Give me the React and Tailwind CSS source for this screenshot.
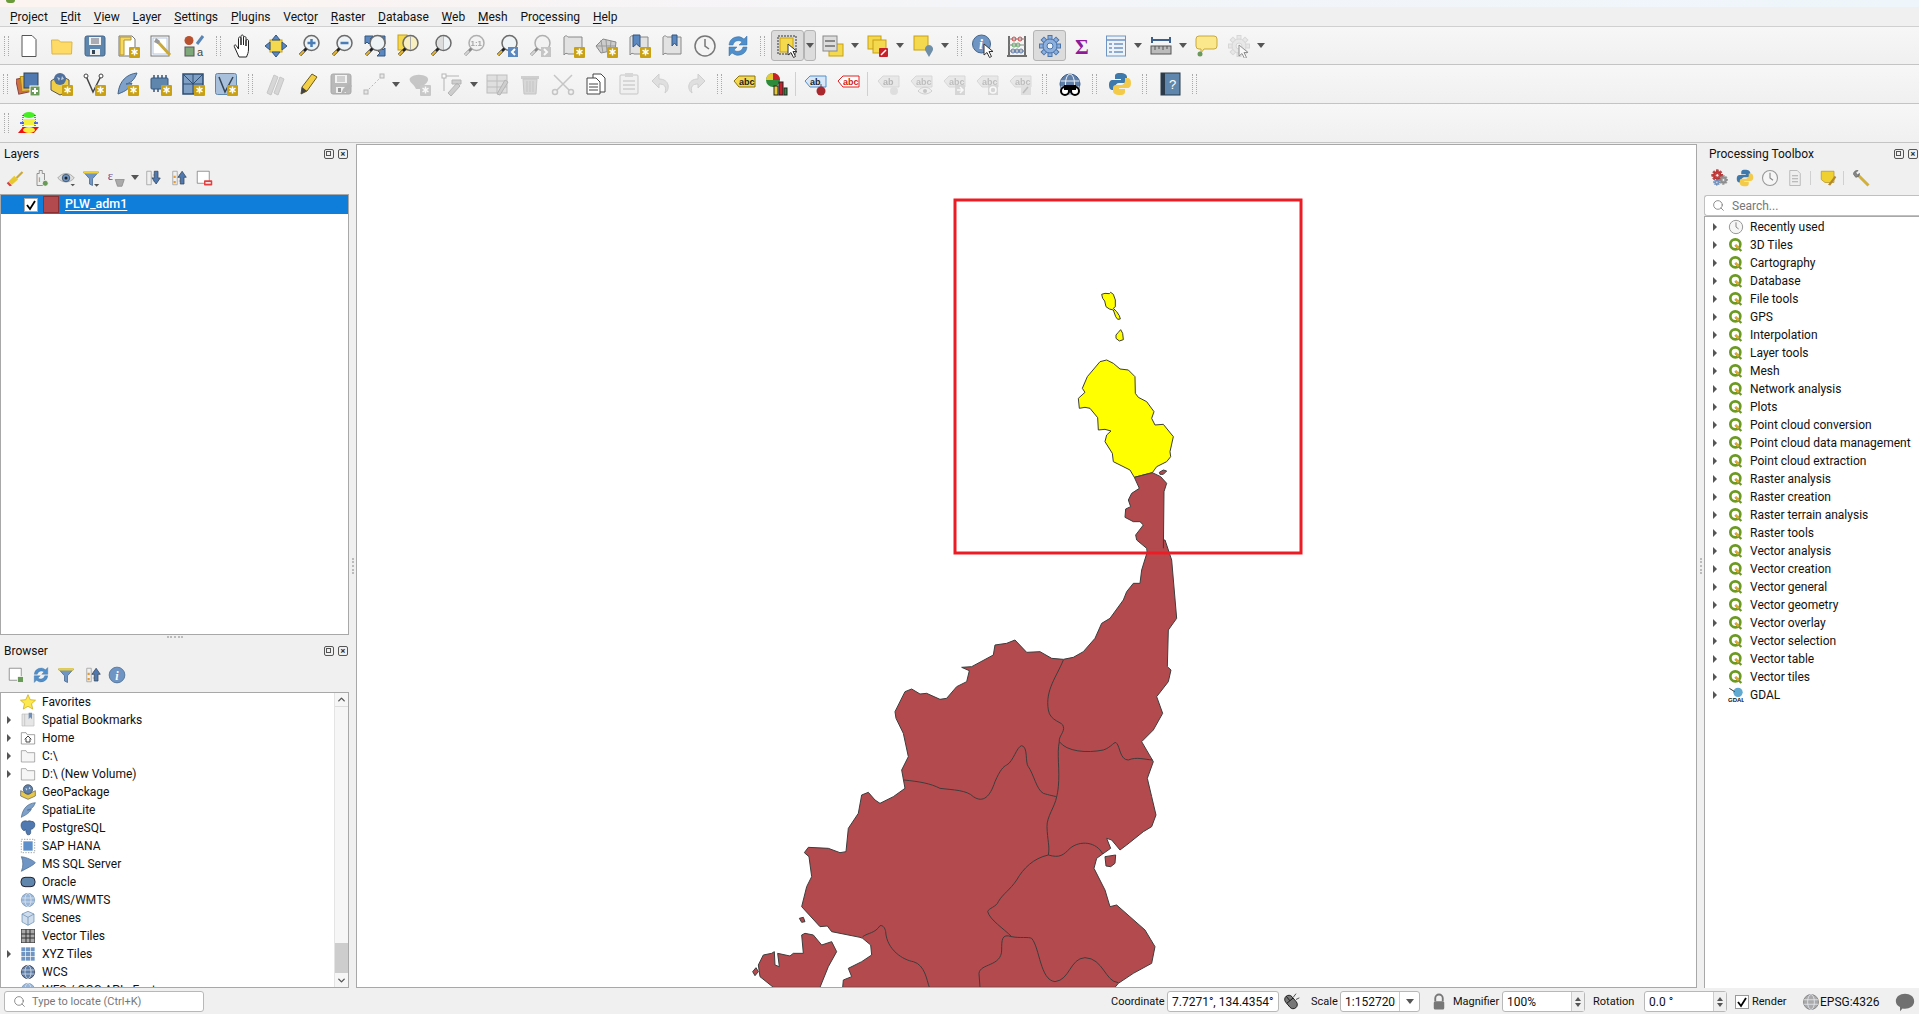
import { Search, ChevronUp, ChevronDown } from "lucide-react";

const menus = [
  ["", "P", "roject"], ["", "E", "dit"], ["", "V", "iew"], ["", "L", "ayer"], ["", "S", "ettings"], ["", "P", "lugins"],
  ["Vect", "o", "r"], ["", "R", "aster"], ["", "D", "atabase"], ["", "W", "eb"], ["", "M", "esh"], ["Pro", "c", "essing"], ["", "H", "elp"],
];

/* small pieces shared between icons */
const Badge = () => (
  <g>
    <rect x="13" y="13" width="11" height="11" rx="1" fill="#c9a112" />
    <path d="M18.5 14.5v7M15.5 16.2l6 3.6M21.5 16.2l-6 3.6" stroke="#fff" strokeWidth="1.5" />
  </g>
);
const Cursor = ({ x = 12, y = 10 }) => (
  <path transform={`translate(${x} ${y})`} d="M0 0v11l3-2.5 2.5 5 2-1-2.5-5h4z" fill="#fff" stroke="#333" strokeWidth="1" />
);
const Mag = ({ lens = "#eef3f6", children }) => (
  <g>
    <circle cx="14.5" cy="9" r="7.5" fill={lens} stroke="#6b6b6b" strokeWidth="1.5" />
    <path d="M9.5 14.5L3 21" stroke="#222" strokeWidth="3" />
    <path d="M7 17l-4 4" stroke="#e8b82e" strokeWidth="2" />
    {children}
  </g>
);
const Label = ({ fill = "#f4d94e", stroke = "#8a7410", color = "#222", text = "abc" }) => (
  <g>
    <path d="M2 9l5-5h16v11H7z" fill={fill} stroke={stroke} />
    <text x="7" y="13" fontSize="9" fontWeight="700" fontFamily="Liberation Sans" fill={color}>{text}</text>
  </g>
);
const Scroll = () => <path d="M3 3c2-2 3-1 4 0h14v17H7c-1-1-3-1-4 1z" fill="#e2e2e2" stroke="#888" />;
const Floppy = () => (
  <g>
    <rect x="2" y="2" width="20" height="20" rx="2" fill="#5f87ae" stroke="#44658a" />
    <rect x="6" y="3" width="12" height="8" fill="#f2f2f2" />
    <path d="M8 5h8M8 7h8M8 9h8" stroke="#667" />
    <rect x="7" y="15" width="10" height="6" fill="#eee" />
    <rect x="9" y="16" width="3" height="4" fill="#345" />
  </g>
);
const Globe = ({ fill = "#6f95c4", line = "#3d5f8c" }) => (
  <g>
    <circle cx="12" cy="12" r="10" fill={fill} stroke={line} />
    <ellipse cx="12" cy="12" rx="4.5" ry="10" fill="none" stroke="#e8eef5" />
    <path d="M2.5 9h19M2.5 15h19" stroke="#e8eef5" />
  </g>
);
const Funnel = ({ top = "#f0d030" }) => (
  <g>
    <path d="M2 4h20l-8 9v9l-4-2v-7z" fill="#6f95c4" stroke="#44658a" />
    <rect x="2" y="3" width="20" height="3" fill={top} />
  </g>
);
const Gear = ({ fill = "#8db0dc", stroke = "#4a74ac" }) => (
  <g>
    {[0, 45, 90, 135, 180, 225, 270, 315].map((a) => (
      <rect key={a} x="10" y="1.5" width="4" height="5" fill={fill} stroke={stroke} transform={`rotate(${a} 12 12)`} />
    ))}
    <circle cx="12" cy="12" r="7" fill={fill} stroke={stroke} />
    <circle cx="12" cy="12" r="3" fill="#eef3f8" stroke={stroke} />
  </g>
);
const Tree = ({ y = 0 }) => (
  <path transform={`translate(0 ${y})`} d="M5 3l6 0v18H5zM13 8h6v8h-6M11 11h2" fill="none" stroke="#999" />
);

const icons = {
  new: <path d="M5 1.5h10l4 4v17H5z" fill="#fff" stroke="#555" />,
  open: <path d="M2 20l-.5-14h7l2 2H22l-.5 12z" fill="#fedb66" stroke="#d9b64a" />,
  save: <Floppy />,
  newLayout: <g><path d="M3 2h13l3 3v17H3z" fill="#fff" stroke="#777" /><path d="M4 3h11v3H8v15H4z" fill="#f6d95e" stroke="#b8952a" /><Badge /></g>,
  layoutMgr: <g><rect x="2" y="2" width="18" height="20" fill="#fff" stroke="#777" /><rect x="4" y="4" width="14" height="16" fill="#fff" stroke="#b8c6e0" /><path d="M9 8l12 13" stroke="#c9a93a" strokeWidth="3" /><path d="M7 4l4 3-2 3-4-2z" fill="#999" /></g>,
  style: <g><circle cx="7" cy="6.5" r="4.5" fill="#b8512e" /><path d="M15 10l6-8" stroke="#5a86b5" strokeWidth="3" /><rect x="3" y="13" width="9" height="9" fill="#7fa87a" stroke="#555" /><text x="15" y="22" fontSize="11" fontFamily="Liberation Sans" fill="#444">a</text></g>,
  pan: <path d="M8 23L3.500 13c-1-2 1-3 2-1l2 3V4.500c0-2 2.500-2 2.500 0V11V2.500c0-2 2.500-2 2.500 0V11V4c0-2 2.500-2 2.500 0v8V7c0-2 2.500-2 2.500 0v8c0 4-1 5-2 8z" fill="#fff" stroke="#222" />,
  panSel: <g><rect x="6" y="6" width="12" height="12" fill="#f4d94e" stroke="#c9a010" /><path d="M12 1l4 5H8zM12 23l4-5H8zM1 12l5-4v8zM23 12l-5-4v8z" fill="#5b88c0" stroke="#35567f" /></g>,
  zoomIn: <Mag><path d="M14.500 5v8M10.500 9h8" stroke="#4a7db5" strokeWidth="2.500" /></Mag>,
  zoomOut: <Mag><path d="M10.500 9h8" stroke="#4a7db5" strokeWidth="2.500" /></Mag>,
  zoomFull: <g><path d="M2 2h8L7 5l2 2-3 3-2-2-2 2zM22 2h-8l3 3-2 2 3 3 2-2 2 2zM22 22h-8l3-3-2-2 3-3 2 2 2-2z" fill="#5b88c0" stroke="#35567f" /><Mag /></g>,
  zoomSel: <g><rect x="2" y="1" width="9" height="15" fill="#f4d94e" stroke="#c9a010" /><Mag lens="#f7efc0" /><path d="M14.500 2v14" stroke="#aaa" /></g>,
  zoomLayer: <g><Mag /><path d="M14.500 2v14" stroke="#999" /><path d="M8 9a6.500 6.500 0 0 1 6.500-6.500v13A6.500 6.500 0 0 1 8 9" fill="#ddd" /></g>,
  zoom11: <Mag><text x="8.500" y="12" fontSize="8" fontWeight="700" fontFamily="Liberation Sans" fill="#555">1:1</text></Mag>,
  zoomLast: <g><Mag /><rect x="13" y="13" width="10" height="10" fill="#5b88c0" /><path d="M20 15l-3 3 3 3" stroke="#fff" strokeWidth="2" fill="none" /></g>,
  zoomNext: <g><Mag /><rect x="13" y="13" width="10" height="10" fill="#999" /><path d="M16 15l3 3-3 3" stroke="#fff" strokeWidth="2" fill="none" /></g>,
  newMap: <g><Scroll /><Badge /></g>,
  new3d: <g><path d="M2 12l7-7 13 3 -1 8-14 3z" fill="#ccc" stroke="#888" /><path d="M7 6l2 13M12 6l1 12M17 7l-1 10M3 12l18 0" stroke="#999" /><Badge /></g>,
  newBm: <g><Scroll /><path d="M6 1h7v12l-3.500-3L6 13z" fill="#5b88c0" stroke="#35567f" /><Badge /></g>,
  showBm: <g><Scroll /><path d="M12 1h5v11l-2.500-3-2.500 3z" fill="#5b88c0" stroke="#35567f" /></g>,
  clock: <g><circle cx="12" cy="12" r="10" fill="#f4f4f4" stroke="#777" strokeWidth="1.500" /><path d="M12 5v7l4 3" stroke="#777" strokeWidth="1.500" fill="none" /></g>,
  refresh: <path d="M3 11a9 9 0 0 1 15-6l3-3v9h-8l3-3a5.500 5.500 0 0 0-9 3zM21 13a9 9 0 0 1-15 6l-3 3v-9h8l-3 3a5.500 5.500 0 0 0 9-3z" fill="#4f8fcb" stroke="#3a6ea3" strokeWidth=".5" />,
  select: <g><rect x="2" y="2" width="18" height="18" fill="none" stroke="#333" strokeDasharray="2 1" /><rect x="4" y="4" width="13" height="14" fill="#f4d94e" stroke="#c9a010" /><Cursor x={12} y={10} /></g>,
  attrSel: <g><rect x="8" y="10" width="14" height="12" fill="#f4d94e" stroke="#c9a010" /><rect x="2" y="2" width="14" height="15" fill="#ddd" stroke="#888" /><path d="M4 7h10M4 12h10" stroke="#888" strokeWidth="2" fill="none" /></g>,
  deselect: <g><rect x="2" y="2" width="13" height="13" fill="#f4d94e" stroke="#c9a010" /><rect x="7" y="6" width="13" height="13" fill="#f4d94e" stroke="#c9a010" /><rect x="13" y="14" width="9" height="9" rx="1" fill="#c8202a" /><path d="M15 21l5-5" stroke="#fff" strokeWidth="1.500" /></g>,
  selLoc: <g><rect x="3" y="2" width="14" height="14" fill="#f4d94e" stroke="#c9a010" /><path d="M18 23l-3.500-6a4 4 0 1 1 7 0z" fill="#6f8fa8" /></g>,
  identify: <g><circle cx="9.500" cy="10" r="9" fill="#6f95c4" stroke="#44658a" /><text x="7" y="15" fontSize="14" fontWeight="700" fontStyle="italic" fontFamily="Liberation Serif" fill="#fff">i</text><Cursor x={12} y={10} /></g>,
  calc: <g><path d="M4 2v19M20 2v19M2 22h20" stroke="#444" strokeWidth="1.500" /><path d="M4 5h16M4 11h16M4 17h16" stroke="#888" /><circle cx="9" cy="5" r="2" fill="none" stroke="#c44" /><circle cx="15" cy="5" r="2" fill="none" stroke="#c44" /><circle cx="9" cy="11" r="2" fill="none" stroke="#6a6" /><circle cx="13" cy="11" r="2" fill="none" stroke="#6a6" /><circle cx="8" cy="17" r="2" fill="none" stroke="#57a" /><circle cx="12" cy="17" r="2" fill="none" stroke="#57a" /><circle cx="16" cy="17" r="2" fill="none" stroke="#57a" /></g>,
  gear: <Gear />,
  sum: <text x="4" y="20" fontSize="21" fontWeight="700" fontFamily="Liberation Serif" fill="#8f1a9a">Σ</text>,
  table: <g><rect x="2.500" y="2" width="19" height="20" fill="#eef3fa" stroke="#6f95c4" /><path d="M2.500 6h19M5 10h3M10 10h9M5 14h3M10 14h9M5 18h3M10 18h9" stroke="#6f95c4" strokeWidth="1.500" /></g>,
  measure: <g><path d="M3 6h18M3 3v6M21 3v6" stroke="#3d5f8c" strokeWidth="2" /><rect x="2" y="12" width="20" height="8" fill="#bbb" stroke="#555" /><path d="M6 12v4M10 12v3M14 12v4M18 12v3" stroke="#555" /></g>,
  tips: <g><path d="M5 2h15a3 3 0 0 1 3 3v7a3 3 0 0 1-3 3H10l-3 4v-4H5a3 3 0 0 1-3-3V5a3 3 0 0 1 3-3z" fill="#fbe78c" stroke="#c9a93a" /><circle cx="6" cy="20" r="2.500" fill="#6a9a5a" /></g>,
  runTool: <g><Gear fill="#ddd" stroke="#bbb" /><Cursor x={12} y={11} /></g>,

  dsm: <g><rect x="1" y="6" width="13" height="15" fill="#cf7040" stroke="#844" transform="rotate(-12 7 13)" /><rect x="5" y="4" width="13" height="15" fill="#e9b84a" stroke="#a80" transform="rotate(-6 11 11)" /><rect x="8" y="1" width="14" height="15" fill="#4f79b0" stroke="#345" /><rect x="14" y="14" width="10" height="10" fill="#6a9a5a" stroke="#fff" /><path d="M19 16v6M16 19h6" stroke="#fff" strokeWidth="2" /></g>,
  newGpkg: <g><path d="M2 9l9-6 9 5v11l-9 4-9-5z" fill="#f0cf47" stroke="#555" /><circle cx="11" cy="7" r="6" fill="#4f6f9c" /><path d="M8 5l3 1-1 3zM13 4l2 3-3 1z" fill="#bcd" /><Badge /></g>,
  newShp: <g><path d="M4 4l7 16 8-16" fill="none" stroke="#444" strokeWidth="1.500" /><circle cx="4" cy="4" r="2" fill="#fff" stroke="#444" /><circle cx="19" cy="4" r="2" fill="#fff" stroke="#444" /><Badge /></g>,
  newLite: <g><path d="M22 1C12 2 4 9 3 22c5-2 11-4 14-11-3 1-5 1-6 1 4-1 8-3 11-11z" fill="#7fa0c8" stroke="#44658a" /><Badge /></g>,
  newTemp: <g><rect x="3" y="6" width="17" height="11" rx="1" fill="#5f87ae" stroke="#35567f" /><path d="M6 3v3M10 3v3M14 3v3M18 3v3M6 17v3M10 17v3" stroke="#35567f" strokeWidth="1.500" /><Badge /></g>,
  newMesh: <g><rect x="2" y="2" width="20" height="20" fill="#7f9fc4" stroke="#2e4d72" strokeWidth="1.500" /><path d="M2 12h20M12 2v20M2 2l10 10M22 2L12 12" stroke="#2e4d72" /><Badge /></g>,
  newVirtual: <g><rect x="1.500" y="1.500" width="21" height="21" rx="2" fill="#a8c0dc" stroke="#5f87ae" /><path d="M5 5l6 15 8-15" fill="none" stroke="#345" strokeWidth="1.500" /><Badge /></g>,
  digi: <g><path d="M4 21L11 3l4 2-7 18zM11 21l6-16 4 2-6 16z" fill="#bbb" stroke="#999" /></g>,
  pencil: <g><path d="M5 22l1-7L16 2l5 3-10 14z" fill="#f3cf45" stroke="#6b5a1a" /><path d="M5 22l1-7 5 4z" fill="#444" /></g>,
  saveEdit: <g><Floppy /><path d="M12 22l2-5 6-6 3 3-6 6z" fill="#777" /></g>,
  line: <g><path d="M4 20L20 4" stroke="#777" strokeDasharray="2 2" /><rect x="2" y="18" width="4" height="4" fill="#ddd" stroke="#777" /><rect x="18" y="2" width="4" height="4" fill="#ddd" stroke="#777" /></g>,
  poly: <g><path d="M3 6c4-4 12-4 17-1 3 3-1 7-3 8v4H9C7 12 1 10 3 6z" fill="#999" /><Badge /></g>,
  vertex: <g><path d="M4 4h15M4 4v15" stroke="#777" /><rect x="2" y="2" width="4" height="4" fill="#fff" stroke="#777" /><path d="M8 21l9-10 3 3-9 10zM12 8l9 0 0 4-9 0z" fill="#aaa" stroke="#777" /></g>,
  editRow: <g><rect x="2" y="3" width="20" height="18" fill="#ccc" stroke="#888" /><path d="M2 9h20M2 15h20M12 3v18" stroke="#888" /><path d="M12 22L20 8l3 2-8 13z" fill="#aaa" stroke="#777" /></g>,
  trash: <g><rect x="3" y="4" width="18" height="3" fill="#aaa" /><path d="M5 7h14l-1 15H6z" fill="#c8b8b0" stroke="#998" /><path d="M9 9v11M12 9v11M15 9v11" stroke="#998" /></g>,
  cut: <g><path d="M3 3l15 15M21 3L6 18" stroke="#999" strokeWidth="1.500" /><circle cx="4" cy="20" r="2.500" fill="none" stroke="#999" strokeWidth="1.500" /><circle cx="20" cy="20" r="2.500" fill="none" stroke="#999" strokeWidth="1.500" /></g>,
  copy: <g><path d="M9 2h8l4 4v14H9z" fill="#fff" stroke="#444" /><path d="M3 6h9l4 4v12H3z" fill="#fff" stroke="#444" /><path d="M5 12h9M5 15h9M5 18h9" stroke="#444" /></g>,
  paste: <g><rect x="3" y="3" width="18" height="19" rx="1" fill="#eee" stroke="#999" /><rect x="8" y="1" width="8" height="4" fill="#bbb" /><path d="M6 9h12M6 13h12M6 17h12" stroke="#aaa" strokeWidth="1.500" /></g>,
  undo: <path d="M9 2L2 9l7 7v-4c5 0 8 2 6 9 5-3 5-14-6-14z" fill="#ccc" stroke="#aaa" />,
  redo: <path d="M15 2l7 7-7 7v-4c-5 0-8 2-6 9-5-3-5-14 6-14z" fill="#ccc" stroke="#aaa" />,
  abc: <Label />,
  chart: <g><circle cx="8" cy="8" r="7" fill="#2d8a3a" /><path d="M8 8V1a7 7 0 0 1 7 7z" fill="#c8202a" /><path d="M8 8H1a7 7 0 0 1 7-7z" fill="#e8c830" /><rect x="9" y="14" width="4" height="9" fill="#e8c830" stroke="#222" /><rect x="14" y="10" width="4" height="13" fill="#c8202a" stroke="#222" /><rect x="19" y="16" width="3" height="7" fill="#2d8a3a" stroke="#222" /></g>,
  abPin: <g><Label fill="#d8e6f8" stroke="#4f8fcb" text="ab" /><path d="M18 12v4" stroke="#555" /><circle cx="18" cy="19" r="4.500" fill="#a8282e" /></g>,
  abcRed: <Label fill="#fff" stroke="#e02020" color="#d02020" />,
  abGray1: <g><Label fill="#ddd" stroke="#bbb" color="#777" text="ab" /><circle cx="18" cy="19" r="4" fill="#ccc" /></g>,
  abGray2: <g><Label fill="#ddd" stroke="#bbb" color="#888" /><path d="M9 19c4-5 10-5 14 0-4 4-10 4-14 0z" fill="#eee" stroke="#aaa" /><circle cx="16" cy="19" r="2" fill="#999" /></g>,
  abGray3: <g><Label fill="#ddd" stroke="#bbb" color="#888" /><rect x="13" y="13" width="10" height="10" fill="#bbb" /><path d="M15 18h6M18 15l3 3-3 3" stroke="#fff" strokeWidth="1.500" fill="none" /></g>,
  abGray4: <g><Label fill="#ddd" stroke="#bbb" color="#888" /><rect x="13" y="13" width="10" height="10" fill="#bbb" /><circle cx="18" cy="18" r="3" stroke="#fff" strokeWidth="1.500" fill="none" /></g>,
  abGray5: <g><Label fill="#ddd" stroke="#bbb" color="#888" /><rect x="13" y="13" width="10" height="10" fill="#ccc" /><path d="M15 21l5-6" stroke="#888" strokeWidth="1.500" /></g>,
  metasearch: <g><Globe fill="#5f7fa8" /><circle cx="7" cy="19" r="4" fill="#fff" stroke="#000" strokeWidth="2" /><circle cx="17" cy="19" r="4" fill="#fff" stroke="#000" strokeWidth="2" /><path d="M6 13h12v5H6z" fill="#000" /></g>,
  python: <g><path d="M12 1c-5 0-5 2-5 4v2h6v1H5c-3 0-4 2-4 5s1 5 4 5h2v-3c0-2 2-4 4-4h5c2 0 3-1 3-3V5c0-2-2-4-7-4z" fill="#3f79ab" /><path d="M12 23c5 0 5-2 5-4v-2h-6v-1h8c3 0 4-2 4-5s-1-5-4-5h-2v3c0 2-2 4-4 4H8c-2 0-3 1-3 3v3c0 2 2 4 7 4z" fill="#f3ca4a" /></g>,
  help: <g><rect x="3" y="1" width="19" height="22" fill="#5f87ae" stroke="#2a3a4a" /><rect x="3" y="1" width="4" height="22" fill="#2a3a4a" /><text x="11" y="17" fontSize="13" fontFamily="Liberation Sans" fill="#fff">?</text></g>,

  brush: <g><path d="M13 11l8-8 2 2-8 8z" fill="#c9a93a" /><path d="M3 17l8-8 5 5-8 7z" fill="#e8c830" /><path d="M3 17l5 5-3 1-4-4z" fill="#d04040" /></g>,
  addGroup: <g><path d="M8 22V6h3V2h4v4h3v16z" fill="#eee" stroke="#777" /><text x="10" y="17" fontSize="10" fontFamily="Liberation Sans" fill="#57a">i</text><circle cx="19" cy="19" r="4" fill="#6a9a5a" stroke="#fff" /></g>,
  eye: <g><path d="M1 12c6-8 16-8 22 0-6 7-16 7-22 0z" fill="#ddd" stroke="#999" /><circle cx="12" cy="12" r="5" fill="#6f95c4" stroke="#345" /><circle cx="12" cy="12" r="2" fill="#222" /><path d="M18 20h6l-3 3z" fill="#555" /></g>,
  funnelDd: <g><Funnel /><path d="M16 20h7l-3.500 3.500z" fill="#555" /></g>,
  filterExp: <g><text x="1" y="15" fontSize="17" fontFamily="Liberation Serif" fill="#7a4a8a">ε</text><path d="M11 14h12l-3 9h-6z" fill="#aaa" stroke="#888" /></g>,
  expand: <g><Tree /><path d="M15 3h5v9h3l-5.500 8L12 12h3z" fill="#4f79b0" stroke="#345" /></g>,
  collapse: <g><Tree /><path d="M15 20h5v-9h3L17.500 3 12 11h3z" fill="#4f79b0" stroke="#345" /><rect x="6" y="9" width="3" height="3" fill="#e89a30" /><rect x="6" y="16" width="3" height="3" fill="#e89a30" /></g>,
  remove: <g><path d="M3 3h16v16H3z" fill="#fff" stroke="#777" /><rect x="12" y="15" width="11" height="7" rx="1" fill="#e04040" /><path d="M14 18.500h7" stroke="#fff" strokeWidth="2" /></g>,
  addBrowser: <g><path d="M3 3h16v16H3z" fill="#fff" stroke="#777" /><rect x="14" y="14" width="8" height="8" fill="#6a9a5a" stroke="#fff" /></g>,
  funnelPlain: <Funnel />,
  info: <g><circle cx="12" cy="12" r="10.500" fill="#6f95c4" stroke="#44658a" /><text x="9.500" y="18" fontSize="16" fontWeight="700" fontStyle="italic" fontFamily="Liberation Serif" fill="#fff">i</text></g>,
  gears: <g><g transform="scale(.7)"><Gear fill="#d04040" stroke="#a02020" /></g><g transform="translate(10 8) scale(.55)"><Gear fill="#999" stroke="#777" /></g><g transform="translate(3 13) scale(.4)"><Gear fill="#7fa0c8" stroke="#57a" /></g></g>,
  doc: <g><path d="M5 2h10l4 4v16H5z" fill="#eee" stroke="#aaa" /><path d="M8 9h8M8 13h8M8 17h8" stroke="#aaa" strokeWidth="1.500" /></g>,
  note: <g><path d="M3 3h17v15H8l-5-4z" fill="#f0d030" stroke="#b8952a" /><path d="M12 21l9-12 2 2-8 11z" fill="#b08830" /></g>,
  wrench: <g><path d="M8 8l14 14" stroke="#d0b040" strokeWidth="4" /><path d="M2 7a5 5 0 0 1 6-5L5 5l2 3 3-2a5 5 0 0 1-5 5z" fill="#888" stroke="#666" /></g>,

  // tree icons of the browser panel
  star: <path d="M12 1l3.300 7.500 8 .8-6 5.300 1.800 8L12 18.500 4.900 22.600l1.800-8-6-5.300 8-.8z" fill="#fce94f" stroke="#c4a000" />,
  bm: <g><path d="M3 3h18v18H3z" fill="#e6e6e6" stroke="#bbb" /><path d="M7 3v18" stroke="#bbb" /><path d="M13 1h5v10l-2.500-3-2.500 3z" fill="#6f8fb8" /></g>,
  home: <g><path d="M2 21V4h7l2 3h11v14z" fill="#fff" stroke="#777" /><path d="M7 14l5-5 5 5M9 13v5h6v-5" fill="none" stroke="#444" strokeWidth="1.500" /></g>,
  folder: <path d="M2 21V4h7l2 3h11v14z" fill="#f6f6f6" stroke="#888" />,
  gpkg: <g><path d="M1 10l11 6 11-6v8l-11 5-11-5z" fill="#e8c84a" stroke="#555" /><circle cx="12" cy="8" r="7" fill="#5f7fa8" stroke="#345" /><path d="M8 6l3 1-1 3zM14 4l2 3-3 1z" fill="#cde" /></g>,
  feather: <path d="M23 1C12 2 4 9 2 23c5-3 11-5 15-12-3 1-5 1-6 1 5-1 9-3 12-11z" fill="#7fa0c8" stroke="#44658a" />,
  pg: <path d="M5 2c-3 1-4 5-3 9 1 3 3 5 4 5 1 0 2-1 2-2 1 2 1 6 3 8 3 1 5-1 5-3v-5c3 0 5-2 6-5 1-4-1-7-5-7-2-1-4-1-6 0-2-1-4-1-6 0z" fill="#4f79b0" stroke="#2e4d72" />,
  hana: <g><rect x="2" y="2" width="20" height="20" fill="none" stroke="#777" strokeDasharray="2 2" /><rect x="5" y="5" width="14" height="14" fill="#5f8fca" /></g>,
  mssql: <path d="M2 1c8 1 17 5 21 9-3 4-12 8-21 13 3-7 3-15 0-22z" fill="#6f95c4" stroke="#44658a" />,
  oracle: <rect x="1.500" y="5" width="21" height="14" rx="6" fill="#5f87ae" stroke="#223" strokeWidth="1.500" />,
  wms: <Globe fill="#9ab6d8" line="#6f8fb0" />,
  scenes: <g><path d="M12 2l9 4v12l-9 5-9-5V6z" fill="#cfdceb" stroke="#5f87ae" /><path d="M3 6l9 5 9-5M12 11v12" fill="none" stroke="#5f87ae" /></g>,
  vt: <g><rect x="2" y="2" width="20" height="20" fill="#aaa" stroke="#333" /><path d="M2 9h20M2 15h20M9 2v20M15 2v20" stroke="#333" strokeWidth="1.500" /></g>,
  xyz: <g>{[2, 9, 16].map((y) => [2, 9, 16].map((x) => <rect key={`${x}-${y}`} x={x} y={y} width="6" height="6" fill="#6f95c4" />))}</g>,
  wcs: <Globe fill="#5f7fa8" line="#223" />,
  q: <g><circle cx="11" cy="11" r="7.500" fill="#fff" stroke="#6a9a1f" strokeWidth="4" /><path d="M11 12l9 9" stroke="#6a9a1f" strokeWidth="3.500" /><path d="M11 12l5 5" stroke="#e8a030" strokeWidth="3.500" /></g>,
  recent: <g><circle cx="12" cy="12" r="10" fill="#f6f6f6" stroke="#999" strokeWidth="1.500" /><path d="M12 5v7l4 3" stroke="#888" strokeWidth="1.500" fill="none" /></g>,
  gdal: <g><circle cx="15" cy="8" r="7" fill="#5fa8d0" /><path d="M2 2l8 5" stroke="#333" strokeWidth="1.500" /><text x="0" y="23" fontSize="9" fontWeight="700" fontFamily="Liberation Sans" fill="#111">GDAL</text></g>,

  mouse: <g><g transform="rotate(-40 12 12)"><rect x="7" y="3" width="10" height="18" rx="5" fill="#777" stroke="#111" /><path d="M7 10h10M12 3v7" stroke="#111" /></g><path d="M18 2l-3 4M22 7l-4 2" stroke="#333" /></g>,
  lock: <g><path d="M7 11V7a5 5 0 0 1 10 0v4" fill="none" stroke="#777" strokeWidth="2.500" /><rect x="5" y="11" width="14" height="11" rx="2" fill="#777" /></g>,
  epsg: <Globe fill="#aaa" line="#777" />,
  bubble: <path d="M12 2c6 0 11 3.500 11 9s-5 9-11 9c-1 0-2 0-3-.3L6 23v-5c-3-1.500-5-4-5-7 0-5.500 5-9 11-9z" fill="#707070" />,
};

function Icon({ name, size = 24, off }) {
  return (
    <svg viewBox="0 0 24 24" width={size} height={size} className={off ? "shrink-0 grayscale opacity-50" : "shrink-0"}>
      {icons[name]}
    </svg>
  );
}

function Arrow() {
  return <span className="h-0 w-0 border-x-[4px] border-t-[5px] border-x-transparent border-t-[#555]" />;
}

function Handle({ w }) {
  return (
    <div className={`flex shrink-0 justify-center ${w}`}>
      <div className="h-5 w-[5px] border-x border-dotted border-[#aaa]" />
    </div>
  );
}

function ToolButton({ name, off, active }) {
  return (
    <div className={active ? "flex h-[31px] w-[33px] shrink-0 items-center justify-center rounded-[3px] border border-[#b4b4b4] bg-[#dcdcdc]" : "flex h-[31px] w-[33px] shrink-0 items-center justify-center"}>
      <Icon name={name} off={off} />
    </div>
  );
}

function Drop({ active, w = "w-3" }) {
  return (
    <div className={active ? `flex h-[31px] ${w} shrink-0 items-center justify-center rounded-[3px] border border-[#b4b4b4] bg-[#dcdcdc]` : `flex h-[31px] ${w} shrink-0 items-center justify-center`}>
      <Arrow />
    </div>
  );
}

function ToolRow({ h = "h-[39px]", children }) {
  return <div className={`flex ${h} items-center border-b border-[#c4c4c4] bg-gradient-to-b from-[#f7f7f7] to-[#f0f0f0]`}>{children}</div>;
}

function Group({ items }) {
  return items.map((n) => <ToolButton key={n} name={n} />);
}

function OffGroup({ items }) {
  return items.map((n) => <ToolButton key={n} name={n} off />);
}

function Sep({ m }) {
  return <div className={`h-6 w-px shrink-0 bg-[#d0d0d0] ${m}`} />;
}

function DockHeader({ title }) {
  return (
    <div className="flex h-[22px] items-center justify-between pl-1 pr-[1px]">
      <span>{title}</span>
      <div className="flex gap-1">
        <div className="relative h-[10px] w-[10px] rounded-[2px] border border-[#555]"><div className="absolute left-[1px] top-[1px] h-[5px] w-[5px] border border-[#555] bg-[#f0f0f0]" /></div>
        <div className="flex h-[10px] w-[10px] items-center justify-center rounded-[2px] border border-[#555] text-[9px] font-bold leading-none text-[#333]">×</div>
      </div>
    </div>
  );
}

function TreeRow({ icon, label, arrow, rightPanel }) {
  return (
    <div className="flex h-[18px] items-center whitespace-nowrap">
      <span className={rightPanel ? "flex w-[19px] shrink-0 justify-center" : "flex w-[16px] shrink-0 justify-center"}>
        {arrow && <span className="h-0 w-0 border-y-[4px] border-l-[4px] border-y-transparent border-l-[#555]" />}
      </span>
      <span className={rightPanel ? "flex w-[26px] shrink-0 justify-center pr-[2px]" : "flex w-[22px] shrink-0 justify-center"}>
        <Icon name={icon} size={16} />
      </span>
      <span className={rightPanel ? "shrink-0" : "shrink-0 pl-[3px]"}>{label}</span>
    </div>
  );
}

const browserItems = [
  ["star", "Favorites", false], ["bm", "Spatial Bookmarks", true], ["home", "Home", true], ["folder", "C:\\", true],
  ["folder", "D:\\ (New Volume)", true], ["gpkg", "GeoPackage", false], ["feather", "SpatiaLite", false], ["pg", "PostgreSQL", false],
  ["hana", "SAP HANA", false], ["mssql", "MS SQL Server", false], ["oracle", "Oracle", false], ["wms", "WMS/WMTS", false],
  ["scenes", "Scenes", false], ["vt", "Vector Tiles", false], ["xyz", "XYZ Tiles", true], ["wcs", "WCS", false],
  ["wms", "WFS / OGC API - Features", false],
];

const toolbox = [
  "3D Tiles", "Cartography", "Database", "File tools", "GPS", "Interpolation", "Layer tools", "Mesh", "Network analysis", "Plots",
  "Point cloud conversion", "Point cloud data management", "Point cloud extraction", "Raster analysis", "Raster creation",
  "Raster terrain analysis", "Raster tools", "Vector analysis", "Vector creation", "Vector general", "Vector geometry",
  "Vector overlay", "Vector selection", "Vector table", "Vector tiles",
];

function MapCanvas() {
  const coast = "#3c3c3c";
  return (
    <svg viewBox="357 145 1339 842" className="block h-full w-full">
      <g transform="translate(950 195) scale(.33333)" strokeWidth="3" stroke={coast} strokeLinejoin="round">
        <path fill="#ffff00" d="M455 298l10-3 13 1 4-4 8 6 6 17v20l-6 5 10 10 8 12 3 10-8 1-6-8-7-20-12-3-10-7-4-17-6-8zM512 404l6 11 2 19-12 4-10-8v-10l7-8zM450 500l20-5 20 10 20 17 25 3 20 20 1 50 9 12 25 13 22 30-7 20 10 20 25-2 30 37-10 45 2 15-12 15-30 15-13 18-54 14-13-22-50-25-3-25-22-35 5-20 13-12-18-5-20 2-2-37-23-28-15-3-17 3-3-30 20-18-8-12 15-35z" />
        <path fill="#b34a4e" d="M628 832l12-7 10 3-10 10-10 0z" />
      </g>
      <g transform="translate(740 540) scale(.33333)" strokeWidth="3" stroke={coast} strokeLinejoin="round" fill="#b34a4e">
        <path d="M1275 0L1295 60L1310 235L1285 270L1282 380L1293 390L1285 425L1250 470L1268 520L1240 570L1205 605L1240 665L1222 715L1235 770L1248 825L1235 860L1210 875L1160 915L1140 930L1115 900L1100 895L1112 925L1088 942L1070 955L1062 985L1095 1050L1110 1100L1130 1095L1215 1170L1245 1220L1235 1270L1180 1300L1135 1330L1125 1342L308 1342L310 1320L335 1310L325 1285L365 1265L395 1245L392 1215L368 1195L360 1192L275 1175L262 1158L240 1160L185 1100L200 1040L215 1010L207 950L193 938L205 922L265 925L300 938L318 935L325 865L355 820L365 765L385 757L405 780L420 790L460 770L495 745L485 690L505 650L490 580L468 535L465 515L495 455L515 447L540 462L560 460L600 478L620 475L650 440L680 425L688 392L665 382L695 380L760 345L765 315L800 310L825 300L860 337L900 335L935 355L970 358L1000 352L1030 335L1065 295L1085 250L1110 235L1150 180L1160 155L1180 130L1200 130L1205 90L1225 25L1195 0Z" />
        <path d="M1095 950l32-5-2 25-13 10-14-2zM178 1135l12-3 5 13-10 2zM38 1295l10-12 7 12-10 12zM100 1342L60 1310 55 1275 70 1245 95 1240 103 1235 105 1275 118 1280 113 1240 150 1248 160 1240 190 1240 185 1185 195 1180 220 1185 245 1215 275 1205 290 1235 265 1280 240 1342z" />
        <g fill="none">
          <path d="M970 360C950 410 915 450 925 510C930 545 970 545 970 560C975 575 955 590 958 605C950 640 960 690 955 740C953 760 950 770 950 770C945 800 920 830 921 860C922 900 930 920 925 945" />
          <path d="M958 605C980 635 1040 640 1090 630C1115 622 1125 600 1130 610C1140 620 1140 660 1165 660C1190 650 1210 658 1238 660" />
          <path d="M492 720C540 725 570 730 600 745C640 750 680 750 700 770C730 790 750 770 765 725C780 690 790 680 800 675C820 665 830 620 845 617C865 620 855 670 865 680C880 700 890 750 910 760C925 765 950 770 950 770" />
          <path d="M925 945C880 955 850 985 830 1020C810 1050 790 1060 775 1085C770 1100 745 1105 743 1115C750 1140 790 1165 815 1190" />
          <path d="M925 945C960 955 970 945 990 925C1020 900 1070 905 1088 942" />
          <path d="M815 1190C785 1180 785 1200 785 1230C785 1280 720 1270 717 1300L720 1342" />
          <path d="M815 1190C840 1195 865 1190 875 1195C900 1225 900 1320 945 1325C990 1320 990 1255 1035 1253C1090 1255 1095 1325 1135 1328" />
          <path d="M368 1190C385 1178 405 1180 420 1157C430 1155 435 1165 437 1175C440 1230 490 1260 520 1265C555 1275 560 1320 568 1342" />
        </g>
      </g>
      <g transform="translate(950 195) scale(.33333)" strokeWidth="3" stroke={coast} strokeLinejoin="round">
        <path fill="#b34a4e" d="M553 847l54-14 25 12 18 20-8 25-2 185-48 0-2-15-30-25-3-15 23-30-10-10-20 0-25-13 2-25 15-7-7-20 10-20 23-15z" />
        <path fill="#b34a4e" stroke="none" d="M592 1060h50l2 30h-50z" />
      </g>
      <rect x="955" y="200" width="346" height="353" fill="none" stroke="#ed1c24" strokeWidth="3" />
    </svg>
  );
}

function Field({ w, children, arrows, combo }) {
  return (
    <div className={`flex h-[21px] ${w} shrink-0 items-center justify-between rounded-[3px] border border-[#b8b8b8] bg-white text-[12px]`}>
      <span className="pl-1 whitespace-nowrap">{children}</span>
      {arrows && (
        <span className="flex h-full w-[13px] flex-col items-center justify-center gap-[2px] border-l border-[#ccc] bg-[#f0f0f0] text-[#555]">
          <span className="h-0 w-0 border-x-[3.5px] border-b-[4px] border-x-transparent border-b-[#555]" />
          <span className="h-0 w-0 border-x-[3.5px] border-t-[4px] border-x-transparent border-t-[#555]" />
        </span>
      )}
      {combo && (
        <span className="flex h-full w-5 items-center justify-center border-l border-[#ccc]">
          <Arrow />
        </span>
      )}
    </div>
  );
}

export default function App() {
  return (
    <div className="flex h-[1014px] w-[1919px] flex-col overflow-hidden bg-[#f0f0f0] font-['Roboto',sans-serif] text-[12px] leading-none text-[#111]">
      {/* cropped title bar */}
      <div className="flex h-[7px] items-start bg-gradient-to-r from-[#fdf4f1] via-[#f4f5f8] to-[#eef6fb] pl-[6px]">
        <div className="h-[3px] w-[9px] rounded-b-[3px] bg-[#6a9a3a]" />
      </div>

      {/* menu bar */}
      <div className="flex h-[20px] items-center gap-[12.8px] border-b border-[#d0d0d0] bg-[#f0f0f0] pl-[10px]">
        {menus.map(([a, b, c], i) => (
          <span key={i}>{a}<span className="underline underline-offset-2">{b}</span>{c}</span>
        ))}
      </div>

      <ToolRow h="h-[38px]">
        <Handle w="w-3" />
        <Group items={["new", "open", "save", "newLayout", "layoutMgr", "style"]} />
        <Handle w="w-4" />
        <ToolButton name="pan" />
        <ToolButton name="panSel" />
        <ToolButton name="zoomIn" />
        <ToolButton name="zoomOut" />
        <ToolButton name="zoomFull" />
        <ToolButton name="zoomSel" />
        <ToolButton name="zoomLayer" />
        <ToolButton name="zoom11" off />
        <ToolButton name="zoomLast" />
        <ToolButton name="zoomNext" off />
        <ToolButton name="newMap" />
        <ToolButton name="new3d" />
        <Group items={["newBm", "showBm", "clock", "refresh"]} />
        <Handle w="w-[17px]" />
        <ToolButton name="select" active />
        <Drop active />
        <ToolButton name="attrSel" />
        <Drop />
        <ToolButton name="deselect" />
        <Drop />
        <ToolButton name="selLoc" />
        <Drop />
        <Handle w="w-4" />
        <Group items={["identify", "calc"]} />
        <ToolButton name="gear" active />
        <ToolButton name="sum" />
        <ToolButton name="table" />
        <Drop />
        <ToolButton name="measure" />
        <Drop />
        <ToolButton name="tips" />
        <ToolButton name="runTool" off />
        <Drop />
      </ToolRow>

      <ToolRow>
        <Handle w="w-[11px]" />
        <Group items={["dsm", "newGpkg", "newShp", "newLite", "newTemp", "newMesh", "newVirtual"]} />
        <Handle w="w-4" />
        <ToolButton name="digi" off />
        <ToolButton name="pencil" />
        <ToolButton name="saveEdit" off />
        <ToolButton name="line" off />
        <Drop />
        <OffGroup items={["poly", "vertex"]} />
        <Drop />
        <OffGroup items={["editRow", "trash", "cut"]} />
        <ToolButton name="copy" />
        <OffGroup items={["paste", "undo", "redo"]} />
        <Handle w="w-[16px]" />
        <Group items={["abc", "chart"]} />
        <Sep m="mx-[2px]" />
        <Group items={["abPin", "abcRed"]} />
        <Sep m="mx-[3px]" />
        <OffGroup items={["abGray1", "abGray2", "abGray3", "abGray4", "abGray5"]} />
        <Handle w="w-[17px]" />
        <ToolButton name="metasearch" />
        <Handle w="w-[17px]" />
        <ToolButton name="python" />
        <Handle w="w-[17px]" />
        <ToolButton name="help" />
        <Handle w="w-[17px]" />
      </ToolRow>

      <ToolRow>
        <Handle w="w-3" />
        <div className="flex h-[31px] w-[33px] items-center justify-center">
          <svg viewBox="0 0 24 24" width="24" height="24">
            <ellipse cx="12" cy="4" rx="6" ry="3" fill="#44ee22" />
            <path d="M6 4v14M18 4v14" stroke="#111" strokeDasharray="1 1" />
            <rect x="6" y="8" width="12" height="6" fill="#f4f040" />
            <path d="M3 12h4M17 12h4" stroke="#2244ee" strokeWidth="1.500" />
            <path d="M1 22l5-6h14l2 0-5 6z" fill="#ee1111" />
            <ellipse cx="12" cy="19" rx="6" ry="3" fill="#f4f040" />
          </svg>
        </div>
      </ToolRow>

      {/* main area */}
      <div className="flex min-h-0 flex-1">
        {/* left docks */}
        <div className="flex w-[349px] shrink-0 flex-col">
          <DockHeader title="Layers" />
          <div className="flex h-[29px] items-center pb-1 pl-[6px]">
            <span className="w-[25px]"><Icon name="brush" size={18} /></span>
            <span className="w-[26px]"><Icon name="addGroup" size={18} /></span>
            <span className="w-[25px]"><Icon name="eye" size={18} /></span>
            <span className="w-[25px]"><Icon name="funnelDd" size={18} /></span>
            <span className="w-[24px]"><Icon name="filterExp" size={18} /></span>
            <span className="flex w-3"><Arrow /></span>
            <span className="w-[26px]"><Icon name="expand" size={18} /></span>
            <span className="w-[26px]"><Icon name="collapse" size={18} /></span>
            <span className="w-[25px]"><Icon name="remove" size={18} /></span>
          </div>
          <div className="h-[441px] border border-[#a8a8a8] bg-white">
            <div className="flex h-[19px] items-center bg-[#0f7edb] pl-[23px]">
              <span className="flex h-[14px] w-[14px] items-center justify-center border border-[#aaa] bg-white">
                <svg viewBox="0 0 12 12" width="12" height="12"><path d="M2 6l3 4 5-8" fill="none" stroke="#000" strokeWidth="1.800" /></svg>
              </span>
              <span className="ml-[5px] h-[17px] w-[16px] border border-[#8a3035] bg-[#b34a4e]" />
              <span className="ml-[6px] text-[12.5px] font-medium text-white underline underline-offset-2">PLW_adm1</span>
            </div>
          </div>
          <div className="flex h-[5px] justify-center"><div className="mt-[1px] h-[2px] w-4 border-t-2 border-dotted border-[#bbb]" /></div>
          <DockHeader title="Browser" />
          <div className="flex h-[30px] items-center pb-1 pl-[7px]">
            <span className="w-[25px]"><Icon name="addBrowser" size={18} /></span>
            <span className="w-[25px]"><Icon name="refresh" size={18} /></span>
            <span className="w-[26px]"><Icon name="funnelPlain" size={18} /></span>
            <span className="w-[25px]"><Icon name="collapse" size={18} /></span>
            <span className="w-[25px]"><Icon name="info" size={18} /></span>
          </div>
          <div className="flex min-h-0 flex-1 border border-[#a8a8a8] bg-white">
            <div className="min-w-0 flex-1 overflow-hidden">
              {browserItems.map(([icon, label, arrow]) => (
                <TreeRow key={label} icon={icon} label={label} arrow={arrow} />
              ))}
            </div>
            <div className="flex w-[14px] shrink-0 flex-col border-l border-[#e4e4e4] bg-[#f6f6f6] text-[#555]">
              <div className="flex h-[14px] items-center justify-center border-b border-[#ddd]"><ChevronUp size={11} strokeWidth={3} /></div>
              <div className="flex-1" />
              <div className="h-[30px] bg-[#cdcdcd]" />
              <div className="flex h-[14px] items-center justify-center"><ChevronDown size={11} strokeWidth={3} /></div>
            </div>
          </div>
        </div>

        {/* splitter */}
        <div className="flex w-[7px] shrink-0 items-center justify-center"><div className="h-4 w-[2px] border-l-2 border-dotted border-[#bbb]" /></div>

        {/* map canvas */}
        <div className="mt-[1px] min-w-0 flex-1 border border-[#a8a8a8] bg-white">
          <MapCanvas />
        </div>

        {/* splitter */}
        <div className="flex w-[7px] shrink-0 items-center justify-center"><div className="h-4 w-[2px] border-l-2 border-dotted border-[#bbb]" /></div>

        {/* processing toolbox */}
        <div className="flex w-[215px] shrink-0 flex-col">
          <div className="pl-[1px]"><DockHeader title="Processing Toolbox" /></div>
          <div className="flex h-[30px] items-center pb-1 pl-[7px]">
            <span className="w-[25px]"><Icon name="gears" size={18} /></span>
            <span className="w-[25px]"><Icon name="python" size={18} /></span>
            <span className="w-[25px]"><Icon name="recent" size={18} /></span>
            <span className="w-[24px]"><Icon name="doc" size={18} /></span>
            <span className="mr-2 h-[14px] w-px bg-[#d0d0d0]" />
            <span className="w-[24px]"><Icon name="note" size={18} /></span>
            <span className="mr-2 h-[14px] w-px bg-[#d0d0d0]" />
            <span className="w-[24px]"><Icon name="wrench" size={18} /></span>
          </div>
          <div className="flex h-[21px] items-center gap-[7px] rounded-l-[3px] border border-r-0 border-[#c0c0c0] bg-white pl-[7px] text-[#777]">
            <Search size={13} strokeWidth={1.500} />
            <span>Search...</span>
          </div>
          <div className="flex-1 overflow-hidden border-l border-t border-[#a8a8a8] bg-white pt-[1px]">
            <TreeRow icon="recent" label="Recently used" arrow rightPanel />
            {toolbox.map((label) => (
              <TreeRow key={label} icon="q" label={label} arrow rightPanel />
            ))}
            <TreeRow icon="gdal" label="GDAL" arrow rightPanel />
          </div>
        </div>
      </div>

      {/* status bar */}
      <div className="flex h-[26px] shrink-0 items-center pl-1 pt-[1px] text-[11px]">
        <div className="flex h-[21px] w-[200px] shrink-0 items-center gap-[6px] rounded-[3px] border border-[#b8b8b8] bg-white pl-2 text-[#777]">
          <Search size={13} strokeWidth={1.500} />
          <span>Type to locate (Ctrl+K)</span>
        </div>
        <span className="ml-[907px] w-[52px] whitespace-nowrap">Coordinate</span>
        <div className="ml-1"><Field w="w-[112px]">7.7271°, 134.4354°</Field></div>
        <span className="flex w-6 justify-center"><Icon name="mouse" size={20} /></span>
        <span className="ml-2 w-[25px]">Scale</span>
        <div className="ml-1"><Field w="w-[80px]" combo>1:152720</Field></div>
        <span className="ml-[11px] flex w-4 justify-center"><Icon name="lock" size={18} /></span>
        <span className="ml-[6px] w-[44px]">Magnifier</span>
        <div className="ml-[5px]"><Field w="w-[83px]" arrows>100%</Field></div>
        <span className="ml-2 w-[41px]">Rotation</span>
        <div className="ml-[10px]"><Field w="w-[83px]" arrows>0.0 °</Field></div>
        <span className="ml-2 flex h-[14px] w-[14px] items-center justify-center border border-[#999] bg-white">
          <svg viewBox="0 0 12 12" width="12" height="12"><path d="M2 6l3 4 5-8" fill="none" stroke="#000" strokeWidth="1.800" /></svg>
        </span>
        <span className="ml-[3px] w-[35px]">Render</span>
        <span className="ml-[15px]"><Icon name="epsg" size={18} /></span>
        <span className="w-[53px] text-[12px]">EPSG:4326</span>
        <span className="ml-[22px]"><Icon name="bubble" size={20} /></span>
      </div>
    </div>
  );
}
